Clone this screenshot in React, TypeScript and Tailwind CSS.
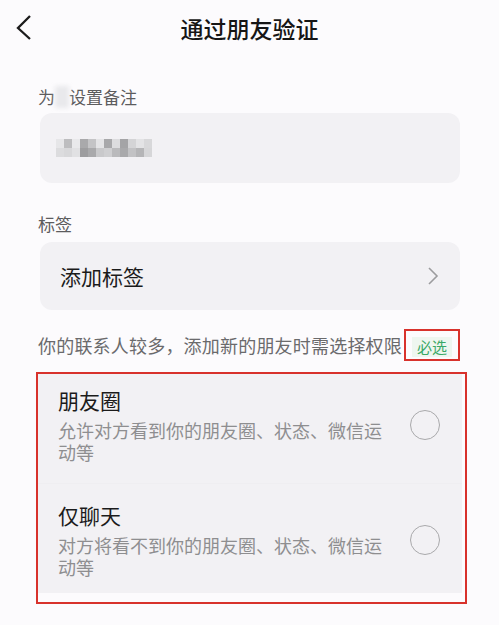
import React from 'react';

const cjk = { fontFamily: '"Noto Sans CJK SC", "Noto Sans", sans-serif' };

// pixelated (mosaic) remark name
const mosaic: string[][] = [
  ['#e6e6e8', '#bdbdbf', '#e9e9eb', '#a9a9ab', '#c4c4c6', '#e4e4e6', '#a8a8aa', '#dcdcde', '#a4a4a6', '#d4d4d6', '#e3e3e5', '#d8d8da'],
  ['#dcdcde', '#d8d8da', '#e1e1e3', '#9d9d9f', '#a9a9ab', '#c9c9cb', '#cfcfd1', '#bababc', '#a9a9ab', '#c2c2c4', '#b5b5b7', '#d6d6d8'],
];

const Option = ({
  title,
  desc,
  className,
}: {
  title: string;
  desc: string;
  className: string;
}) => (
  <div className={`flex items-center pl-[20px] ${className}`}>
    <div className="w-[332px]">
      <div className="text-[21px] leading-[28px] text-[#1b1b1b]">{title}</div>
      <div className="mt-[5px] text-[18px] leading-[22px] text-[#8e8e90]">{desc}</div>
    </div>
    <div className="ml-[20px] w-[30px] h-[30px] rounded-full border-[1.5px] border-[#a9a9ab]" />
  </div>
);

export default function App() {
  return (
    <div className="w-[499px] h-[625px] bg-[#fcfbfd] overflow-hidden" style={cjk}>
      {/* header */}
      <div className="relative h-[56px] flex items-center justify-center">
        <svg className="absolute left-[12px] top-[12px]" width="24" height="32" viewBox="0 0 24 32">
          <polyline points="18,4 6,16 18,27" fill="none" stroke="#1c1c1c" strokeWidth="2.3" strokeLinejoin="miter" />
        </svg>
        <h1 className="text-[23px] font-medium text-[#161616] leading-[32px]">通过朋友验证</h1>
      </div>

      <div className="pl-[38px] pr-[39px]">
        <div className="mt-[29px] flex items-center text-[17px] leading-[24px] text-[#5c5c5e]">
          <span>为</span>
          <span className="inline-block w-[14px] h-[22px] bg-[#e9e9ec] blur-[2px]" />
          <span>设置备注</span>
        </div>
        <div className="ml-[2px] mt-[4px] h-[70px] rounded-[12px] bg-[#f2f1f4] flex items-center pl-[16px]">
          <div className="flex flex-col">
            {mosaic.map((row, i) => (
              <div key={i} className="flex">
                {row.map((c, j) => (
                  <div key={j} className="w-[8px] h-[9px]" style={{ backgroundColor: c }} />
                ))}
              </div>
            ))}
          </div>
        </div>

        <div className="mt-[29px] text-[17px] leading-[24px] text-[#5c5c5e]">标签</div>
        <div className="ml-[2px] mt-[6px] h-[68px] rounded-[12px] bg-[#f2f1f4] flex items-center justify-between pl-[20px] pr-[20px]">
          <span className="text-[21px] leading-[28px] text-[#1b1b1b]">添加标签</span>
          <svg width="14" height="20" viewBox="0 0 14 20">
            <polyline points="3,2 11,10 3,18" fill="none" stroke="#9c9c9e" strokeWidth="1.6" />
          </svg>
        </div>

        <div className="mt-[19px] flex items-center">
          <span className="text-[18px] leading-[24px] text-[#6a6a6c] tracking-[0.2px]">
            你的联系人较多，添加新的朋友时需选择权限
          </span>
          <div className="ml-[2px] w-[56px] h-[32px] border-2 border-[#d8322c] flex items-center justify-center pt-[4px]">
            <span className="bg-[#eef6f0] px-[5px] text-[15px] leading-[20px] text-[#3aa866]">必选</span>
          </div>
        </div>
      </div>

      <div className="ml-[36px] mt-[11px] w-[431px] border-2 border-[#d8322c] pr-[3px] pb-[9px]">
        <div className="bg-[#f2f1f4]">
          <Option
            title="朋友圈"
            desc="允许对方看到你的朋友圈、状态、微信运动等"
            className="pt-[12px] pb-[20px] border-b border-[#efeef1]"
          />
          <Option
            title="仅聊天"
            desc="对方将看不到你的朋友圈、状态、微信运动等"
            className="pt-[17px] pb-[15px]"
          />
        </div>
      </div>
    </div>
  );
}
